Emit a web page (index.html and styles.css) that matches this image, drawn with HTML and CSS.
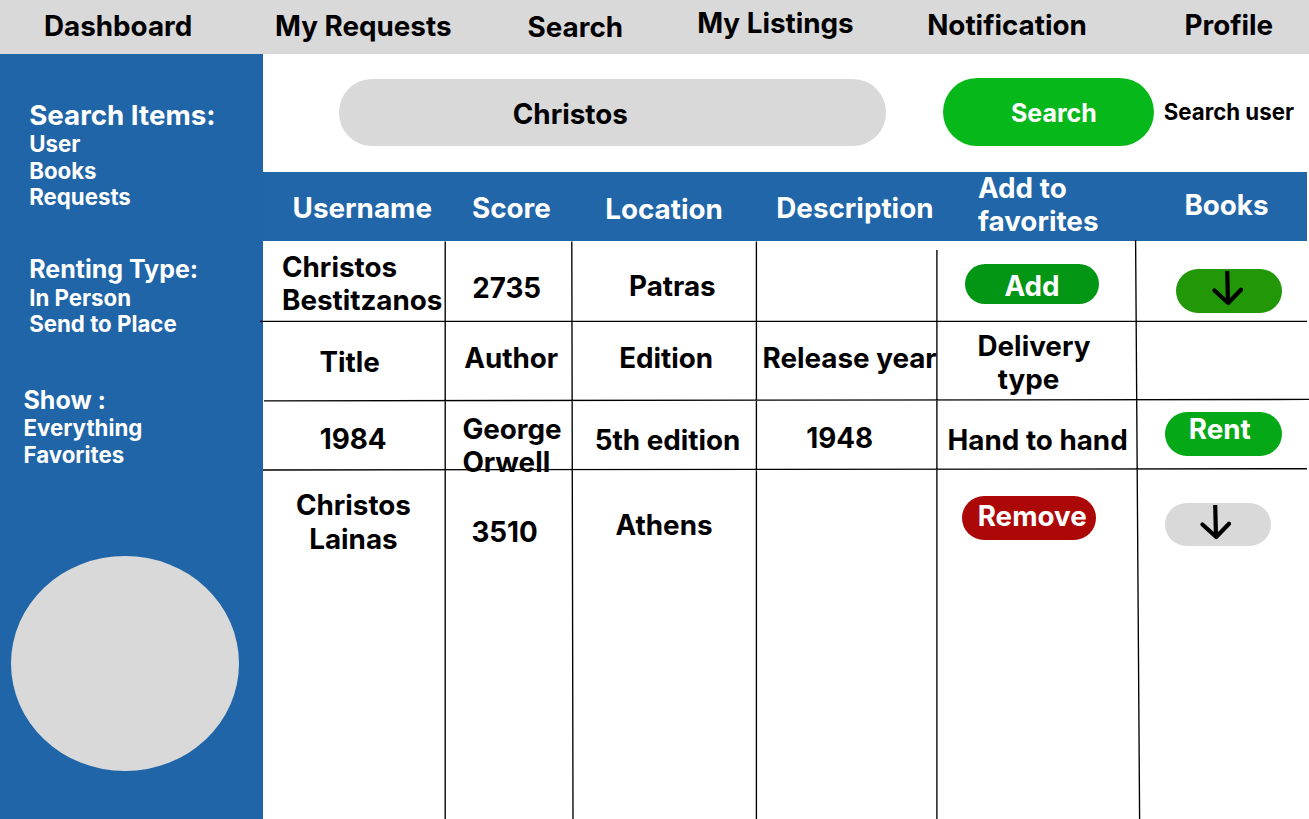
FILE: index.html
```html
<!DOCTYPE html>
<html lang="en">
<head>
<meta charset="utf-8">
<title>Search users</title>
<link rel="stylesheet" href="styles.css">
</head>
<body>
<nav class="topbar">
  <a class="nav-dashboard">Dashboard</a>
  <a class="nav-requests">My Requests</a>
  <a class="nav-search">Search</a>
  <a class="nav-listings">My Listings</a>
  <a class="nav-notification">Notification</a>
  <a class="nav-profile">Profile</a>
</nav>
<div class="layout">
  <aside class="sidebar">
    <section class="filter filter-items">
      <h2>Search Items:</h2>
      <p>User</p><p>Books</p><p>Requests</p>
    </section>
    <section class="filter filter-renting">
      <h2>Renting Type:</h2>
      <p>In Person</p><p>Send to Place</p>
    </section>
    <section class="filter filter-show">
      <h2>Show :</h2>
      <p>Everything</p><p>Favorites</p>
    </section>
    <div class="avatar"></div>
  </aside>
  <main class="content">
    <div class="searchbar">
      <div class="field">Christos</div>
      <div class="submit">Search</div>
      <div class="hint">Search user</div>
    </div>
    <div class="table">
      <div class="row head">
        <div class="h-username">Username</div>
        <div class="h-score">Score</div>
        <div class="h-location">Location</div>
        <div class="h-description">Description</div>
        <div class="h-favorites">Add to<br>favorites</div>
        <div class="h-books">Books</div>
      </div>
      <div class="row user-one">
        <div class="u1-name">Christos<br>Bestitzanos</div>
        <div class="u1-score">2735</div>
        <div class="u1-location">Patras</div>
        <div></div>
        <div class="u1-favorite"><div class="pill add">Add</div></div>
        <div class="u1-books"><div class="pill open">
          <svg class="arrow" viewBox="0 0 32 36"><path class="shaft" d="M16.2 1 17 33"/><path d="M3.5 20.5 17.2 33 30 19.8"/></svg>
        </div></div>
      </div>
      <div class="row book-head">
        <div class="b-title">Title</div>
        <div class="b-author">Author</div>
        <div class="b-edition">Edition</div>
        <div class="b-year">Release year</div>
        <div class="b-delivery"><span class="centered">Delivery<br><span class="type">type</span></span></div>
        <div></div>
      </div>
      <div class="row book-one">
        <div class="k-title">1984</div>
        <div class="k-author">George<br>Orwell</div>
        <div class="k-edition">5th edition</div>
        <div class="k-year">1948</div>
        <div class="k-delivery">Hand to hand</div>
        <div class="k-rent"><div class="pill rent">Rent</div></div>
      </div>
      <div class="row user-two">
        <div class="u2-name"><span class="centered">Christos<br>Lainas</span></div>
        <div class="u2-score">3510</div>
        <div class="u2-location">Athens</div>
        <div></div>
        <div class="u2-favorite"><div class="pill remove">Remove</div></div>
        <div class="u2-books"><div class="pill closed">
          <svg class="arrow" viewBox="0 0 32 36"><path class="shaft" d="M16.2 1 17 33"/><path d="M3.5 20.5 17.2 33 30 19.8"/></svg>
        </div></div>
      </div>
      <svg class="rules" viewBox="260 240 1049 579">
        <path d="M260 321.4H1307M264 400.9 1309 399.4M263 470 1307 468.7M445.2 241.5V819M571.8 241.5 573 819M756.4 241.5V819M936.9 250V819M1135.6 240 1139.6 819"/>
      </svg>
    </div>
  </main>
</div>
</body>
</html>
```

FILE: styles.css
```css
* { box-sizing: border-box; }

body {
  margin: 0;
  width: 1309px;
  height: 819px;
  overflow: hidden;
  display: flex;
  flex-direction: column;
  background: #fff;
  color: #000;
  font-family: Inter, "Liberation Sans", sans-serif;
  font-size: 27.8px;
  font-weight: 700;
  line-height: 33.28px;
  white-space: nowrap;
}

.topbar {
  flex: none;
  height: 54px;
  padding-left: 44px;
  display: grid;
  grid-template-columns: 231px 252.6px 169.6px 230px 257.3px 1fr;
  background: #d9d9d9;
}
.nav-dashboard, .nav-requests { padding-top: 10.1px; }
.nav-search { padding-top: 11.1px; }
.nav-listings { padding-top: 7.1px; }
.nav-notification, .nav-profile { padding-top: 9px; }

.layout { flex: 1; display: flex; min-height: 0; }

.sidebar {
  flex: none;
  width: 262.6px;
  padding-top: 46.4px;
  background: #1f65a8;
  color: #fff;
  font-size: 22.25px;
  line-height: 26.5px;
}
.filter { padding-left: 29.2px; }
.filter h2, .filter p { margin: 0; }
.filter h2 { font-size: 25px; line-height: 29.6px; }
.filter-items { height: 154.9px; }
.filter-items h2 { font-size: 27.7px; line-height: 30.9px; }
.filter-renting { height: 130.5px; }
.filter-show { height: 169.9px; padding-left: 23.5px; }
.avatar {
  width: 228px;
  height: 215.5px;
  margin-left: 11px;
  border-radius: 50%;
  background: #d9d9d9;
}

.content { flex: 1; display: flex; flex-direction: column; min-width: 0; }

.searchbar {
  flex: none;
  height: 118.3px;
  padding-left: 76.4px;
  display: flex;
  align-items: flex-start;
}
.field {
  width: 547px;
  height: 66.7px;
  margin-top: 25px;
  padding: 18.8px 0 0 173.8px;
  border-radius: 33px;
  background: #d9d9d9;
}
.submit {
  width: 211px;
  height: 68px;
  margin: 23.7px 0 0 57px;
  padding: 19.9px 0 0 68px;
  border-radius: 34px;
  background: #07b81a;
  color: #fff;
  font-size: 25px;
  line-height: 30.25px;
}
.hint {
  margin: 45px 0 0 9.7px;
  font-size: 22.25px;
  line-height: 26.6px;
}

.table { flex: 1; position: relative; display: flex; flex-direction: column; }
.row {
  display: grid;
  grid-template-columns: 182.4px 127px 184.5px 180.5px 200px 170px;
}
.head { height: 69.2px; width: 1044.4px; background: #2066a8; color: #fff; }
.user-one { height: 80px; }
.book-head { height: 78.5px; }
.book-one { height: 69.5px; }
.user-two { flex: 1; }

.centered { display: inline-block; text-align: center; }
.type { padding-right: 11px; }

.h-username { padding: 20px 0 0 30px; }
.h-score { padding: 20px 0 0 27px; }
.h-location { padding: 21.1px 0 0 33.2px; }
.h-description { padding: 20px 0 0 19.8px; }
.h-favorites { margin-top: -.8px; padding-left: 41px; }
.h-books { padding: 17.2px 0 0 47.4px; }

.u1-name { padding: 9.2px 0 0 19.4px; }
.u1-score { padding: 30.1px 0 0 27.2px; }
.u1-location { padding: 28.6px 0 0 57px; }
.u1-favorite { padding: 22.8px 0 0 28.5px; }
.u1-books { padding: 28px 0 0 39.5px; }

.b-title { padding: 25px 0 0 56.9px; }
.b-author { padding: 21px 0 0 19.2px; }
.b-edition { padding: 21px 0 0 47.2px; }
.b-year { padding: 21px 0 0 6px; }
.b-delivery { padding: 8.2px 0 0 40.5px; }

.k-title { padding: 23.1px 0 0 57.1px; }
.k-author { padding: 13px 0 0 17.4px; }
.k-edition { padding: 24.1px 0 0 22.8px; }
.k-year { padding: 22px 0 0 49.8px; }
.k-delivery { padding: 24.1px 0 0 10.6px; }
.k-rent { padding: 12.4px 0 0 28px; }

.u2-name { padding: 19.9px 0 0 33.3px; }
.u2-score { padding: 46.5px 0 0 26.4px; }
.u2-location { padding: 39.6px 0 0 43.6px; }
.u2-favorite { padding: 26.2px 0 0 25.5px; }
.u2-books { padding: 33.2px 0 0 28px; }

.pill { border-radius: 22px; color: #fff; }
.add { width: 133.5px; height: 40.2px; padding: 5.8px 0 0 39px; background: #039514; }
.open { width: 106px; height: 43.2px; padding: 1px 0 0 34.5px; background: #229708; }
.rent { width: 117px; height: 43.2px; padding: 1px 0 0 23.8px; background: #05a817; }
.remove { width: 134px; height: 44.8px; padding: 4.8px 0 0 15.2px; background: #ad0808; }
.closed { width: 106px; height: 43.2px; padding: 1.3px 0 0 34.5px; background: #d9d9d9; }

.arrow { display: block; width: 32px; height: 36px; fill: none; stroke: #000; stroke-width: 4.2; stroke-linecap: round; stroke-linejoin: round; }
.shaft { stroke-linecap: butt; }

.rules {
  position: absolute;
  left: -2.6px;
  top: 67.7px;
  width: 1049px;
  height: 579px;
  fill: none;
  stroke: #000;
  stroke-width: 1.35;
}
```
